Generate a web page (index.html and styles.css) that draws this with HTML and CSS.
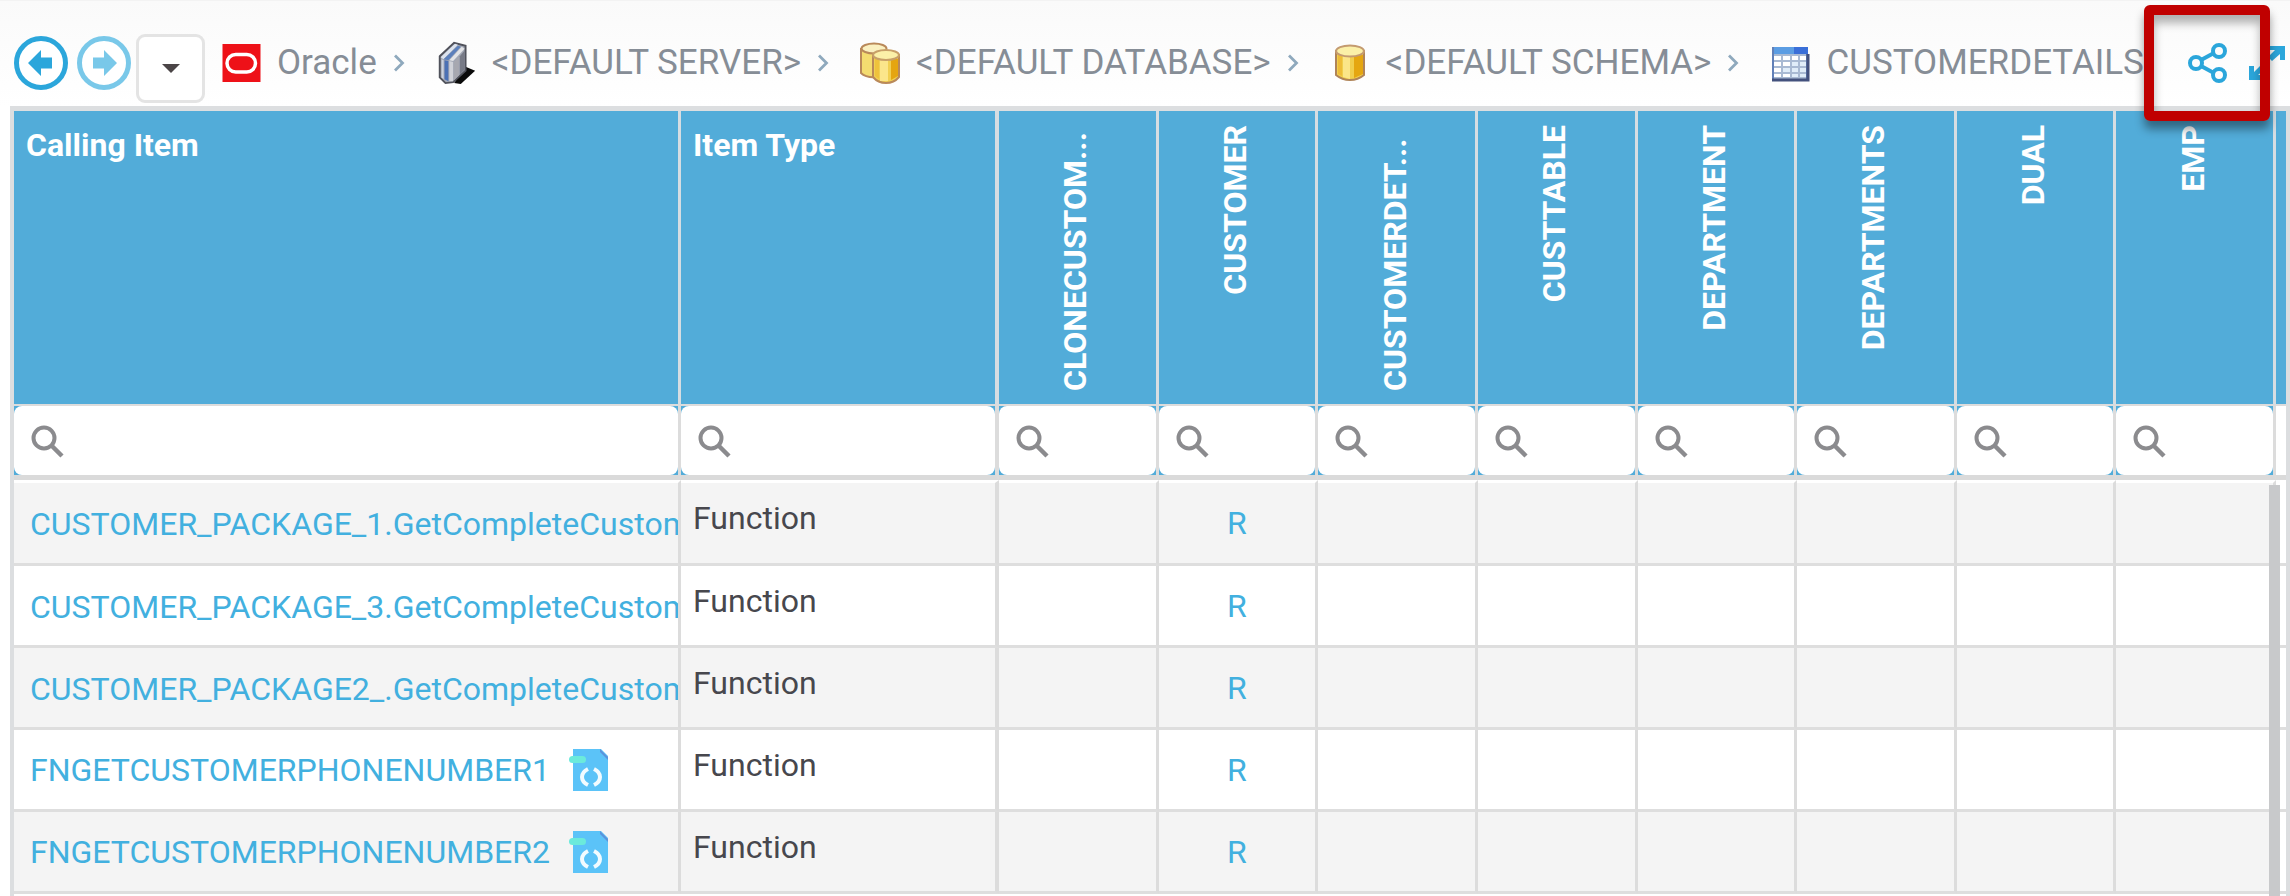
FILE: index.html
```html
<!DOCTYPE html>
<html lang="en">
<head>
<meta charset="utf-8">
<title>CRUD Matrix</title>
<link rel="stylesheet" href="styles.css">
</head>
<body>
<svg class="defs" aria-hidden="true">
  <symbol id="search" viewBox="0 0 34 34"><circle cx="13" cy="13" r="10.5" fill="none" stroke="#8b8b8e" stroke-width="4"/><path d="M20.500 20.500L31 31" stroke="#8b8b8e" stroke-width="4.500"/></symbol>
  <symbol id="chev" viewBox="0 0 12 18"><path d="M2 1.500L9.500 9L2 16.500" fill="none" stroke="#8fa9bd" stroke-width="2.800"/></symbol>
  <symbol id="code" viewBox="0 0 40 44">
    <path d="M4 1H32L39 8V43H4Z" fill="#5bc3f8"/><path d="M31 1L39 9V12L31 4Z" fill="#5a93dc"/>
    <rect x="0" y="8" width="17" height="7" rx="3.500" fill="#6beadb"/>
    <path d="M19 21Q13 24 13 29T19 37M25 21Q31 24 31 29T25 37" fill="none" stroke="#f2fbff" stroke-width="4"/>
  </symbol>
</svg>

<header class="toolbar">
  <button class="round" aria-label="Back"><svg viewBox="0 0 54 54"><circle cx="27" cy="27" r="24.500" fill="#fff" stroke="#2ba6db" stroke-width="5"/><path d="M14 27L27 14V21.500H38V32.500H27V40Z" fill="#2ba6db"/></svg></button>
  <button class="round" aria-label="Forward"><svg viewBox="0 0 54 54"><circle cx="27" cy="27" r="24.500" fill="#fff" stroke="#79c8e9" stroke-width="5"/><path d="M40 27L27 14V21.500H16V32.500H27V40Z" fill="#79c8e9"/></svg></button>
  <button class="drop" aria-label="History"><svg viewBox="0 0 18 9"><path d="M0 0H18L9 9Z" fill="#4b4547"/></svg></button>

  <nav class="crumbs" aria-label="Breadcrumb">
    <span class="crumb">
      <svg class="ico" viewBox="0 0 40 40"><rect x="1.500" y="1" width="38" height="38" fill="#ee1118"/><rect x="6" y="11.500" width="28.500" height="17.500" rx="8.750" fill="none" stroke="#fff" stroke-width="3.500"/></svg>
      <a href="#">Oracle</a></span>
    <svg class="chev"><use href="#chev"/></svg>
    <span class="crumb">
      <svg class="ico" viewBox="0 0 40 46"><path d="M18 44L30 27L40 31L25 45Z" fill="#0a0a0a"/>
        <path d="M3 16L18 2L30 5V31L17 43L9 44L3 38Z" fill="#a2a7b4" stroke="#50525b" stroke-width="2"/>
        <path d="M4 17L19 3L22 4L7 19Z" fill="#dce3ee"/><path d="M7 19L22 5L25 6L12 20Z" fill="#5c80bc"/><path d="M13 20L26 6L29 8L17 21Z" fill="#e3e4e7"/>
        <path d="M5 19L7 20V40L5 38Z" fill="#cbd3e0"/><path d="M8 20L12 21V42L8 40Z" fill="#4b71b5"/><path d="M13 21L17 22V42L13 42Z" fill="#d0d2d8"/><path d="M18 22L23 17V36L18 41Z" fill="#a7a8b0"/><path d="M24 16L29 10V30L24 35Z" fill="#777a86"/></svg>
      <a href="#">&lt;DEFAULT SERVER&gt;</a></span>
    <svg class="chev"><use href="#chev"/></svg>
    <span class="crumb">
      <svg class="ico" viewBox="0 0 40 42"><g stroke="#b9895a" stroke-width="2"><path d="M1 7V31Q6 36 17 35L26 28V6Z" fill="#f4dc70"/><ellipse cx="14" cy="6.500" rx="12.500" ry="5" fill="#faf0c0"/>
        <path d="M13 13V35Q18 41 26 41T39 35V13Z" fill="#f1d052"/></g><path d="M15 17H19V37L15 34Z" fill="#efc23c"/><path d="M20 18H28V39H20Z" fill="#fbe68b"/><path d="M31 17H38V34L31 38Z" fill="#e5a510"/><ellipse cx="26" cy="13" rx="13" ry="5" fill="#fbf0a8" stroke="#c8a068" stroke-width="2"/></svg>
      <a href="#">&lt;DEFAULT DATABASE&gt;</a></span>
    <svg class="chev"><use href="#chev"/></svg>
    <span class="crumb">
      <svg class="ico" viewBox="0 0 40 40"><path d="M6 8V32Q12 37 20 37T34 32V8Z" fill="#f1ce4c" stroke="#b08458" stroke-width="2"/><path d="M8 12H12V33L8 31Z" fill="#eebc38"/><path d="M13 13H20V36L13 34Z" fill="#fbe588"/><path d="M24 12H33V31L24 35Z" fill="#e5a610"/><ellipse cx="20" cy="8" rx="14" ry="5.500" fill="#fbf0a8" stroke="#c49b70" stroke-width="2"/></svg>
      <a href="#">&lt;DEFAULT SCHEMA&gt;</a></span>
    <svg class="chev"><use href="#chev"/></svg>
    <span class="crumb">
      <svg class="ico" viewBox="0 0 40 40"><rect x="2" y="4" width="36" height="34" fill="#a9bad3"/><path d="M2 4H38V11H2Z" fill="#5b9de3"/><path d="M24 4H38V11H24Z" fill="#3a6fd8"/><path d="M4 13h7v4H4zM13 13h7v4h-7zM22 13h6v4h-6zM30 13h6v4h-6zM4 19h7v4H4zM13 19h7v4h-7zM4 25h7v4H4zM4 31h7v3H4zM13 31h7v3h-7z" fill="#fff"/><path d="M22 19h6v4h-6zM30 19h6v4h-6zM13 25h7v4h-7zM22 25h6v4h-6zM30 25h6v4h-6zM22 31h6v3h-6zM30 31h6v3h-6z" fill="#e0edf9"/><path d="M3 4V37H37V11" fill="none" stroke="#6180b8" stroke-width="2"/><path d="M2 37H38V11" fill="none" stroke="#43517d" stroke-width="3"/></svg>
      <a href="#">CUSTOMERDETAILS</a></span>
  </nav>

  <div class="actions">
    <button class="share" aria-label="Share"><svg viewBox="0 0 40 40"><g fill="none" stroke="#2ba6db" stroke-width="4"><path d="M13 17L26 10M13 23L26 30"/><circle cx="8" cy="20" r="6"/><circle cx="31" cy="8" r="6"/><circle cx="31" cy="32" r="6"/></g></svg></button>
    <button class="expand" aria-label="Expand"><svg viewBox="0 0 38 38"><path d="M16 2H37V16H32V10L24 17L20 13L27 6H16ZM1 22H6V28L12 22L16 26L10 31H16V36H1Z" fill="#2ba6db"/></svg></button>
    <span class="highlight"></span>
  </div>
</header>

<main class="frame">
  <table>
    <colgroup><col class="c-item"><col class="c-type"><col span="8"><col class="c-end"></colgroup>
    <thead>
      <tr class="heads">
        <th scope="col">Calling Item</th><th scope="col">Item Type</th>
        <th scope="col" class="v"><span class="long">CLONECUSTOM...</span></th>
        <th scope="col" class="v"><span>CUSTOMER</span></th>
        <th scope="col" class="v"><span class="long">CUSTOMERDET...</span></th>
        <th scope="col" class="v"><span>CUSTTABLE</span></th>
        <th scope="col" class="v"><span>DEPARTMENT</span></th>
        <th scope="col" class="v"><span>DEPARTMENTS</span></th>
        <th scope="col" class="v"><span>DUAL</span></th>
        <th scope="col" class="v"><span>EMP</span></th>
        <td></td>
      </tr>
      <tr class="filters">
        <td><label><svg><use href="#search"/></svg><input type="text" aria-label="Filter Calling Item"></label></td>
        <td><label><svg><use href="#search"/></svg><input type="text" aria-label="Filter Item Type"></label></td>
        <td><label><svg><use href="#search"/></svg><input type="text" aria-label="Filter column 1"></label></td>
        <td><label><svg><use href="#search"/></svg><input type="text" aria-label="Filter CUSTOMER"></label></td>
        <td><label><svg><use href="#search"/></svg><input type="text" aria-label="Filter column 3"></label></td>
        <td><label><svg><use href="#search"/></svg><input type="text" aria-label="Filter CUSTTABLE"></label></td>
        <td><label><svg><use href="#search"/></svg><input type="text" aria-label="Filter DEPARTMENT"></label></td>
        <td><label><svg><use href="#search"/></svg><input type="text" aria-label="Filter DEPARTMENTS"></label></td>
        <td><label><svg><use href="#search"/></svg><input type="text" aria-label="Filter DUAL"></label></td>
        <td><label><svg><use href="#search"/></svg><input type="text" aria-label="Filter EMP"></label></td>
        <td></td>
      </tr>
    </thead>
    <tbody>
      <tr><td class="item"><a href="#">CUSTOMER_PACKAGE_1.GetCompleteCustom</a></td><td class="type">Function</td><td></td><td class="op"><a href="#">R</a></td><td></td><td></td><td></td><td></td><td></td><td></td><td></td></tr>
      <tr><td class="item"><a href="#">CUSTOMER_PACKAGE_3.GetCompleteCustom</a></td><td class="type">Function</td><td></td><td class="op"><a href="#">R</a></td><td></td><td></td><td></td><td></td><td></td><td></td><td></td></tr>
      <tr><td class="item"><a href="#">CUSTOMER_PACKAGE2_.GetCompleteCustom</a></td><td class="type">Function</td><td></td><td class="op"><a href="#">R</a></td><td></td><td></td><td></td><td></td><td></td><td></td><td></td></tr>
      <tr><td class="item"><a href="#">FNGETCUSTOMERPHONENUMBER1</a><svg class="code"><use href="#code"/></svg></td><td class="type">Function</td><td></td><td class="op"><a href="#">R</a></td><td></td><td></td><td></td><td></td><td></td><td></td><td></td></tr>
      <tr><td class="item"><a href="#">FNGETCUSTOMERPHONENUMBER2</a><svg class="code"><use href="#code"/></svg></td><td class="type">Function</td><td></td><td class="op"><a href="#">R</a></td><td></td><td></td><td></td><td></td><td></td><td></td><td></td></tr>
    </tbody>
  </table>
  <div class="scrollbar"></div>
</main>
</body>
</html>
```

FILE: styles.css
```css
* { box-sizing: border-box; }
body {
  margin: 0;
  height: 100vh;
  overflow: hidden;
  display: flex;
  flex-direction: column;
  background: #fff;
  font-family: Roboto, "Liberation Sans", sans-serif;
  font-size: 32px;
  line-height: 40px;
}
.defs { position: absolute; width: 0; height: 0; }
a { text-decoration: none; }
button { background: none; border: 0; padding: 0; cursor: pointer; }
svg { display: block; flex: none; }

/* Toolbar */
.toolbar {
  display: flex;
  align-items: center;
  height: 106px;
  padding: 18px 4px 0 14px;
  border-top: 1px solid #f3f3f3;
  background: linear-gradient(#fafafa, #fff);
}
.round { width: 54px; height: 54px; margin-right: 9px; }
.round svg { width: 54px; height: 54px; }
.drop {
  display: flex;
  align-items: center;
  justify-content: center;
  width: 69px;
  height: 69px;
  margin: 11px 16px 0 -4px;
  border: 3px solid #e4e4e4;
  border-radius: 9px;
  background: #fff;
}
.drop svg { width: 18px; height: 9px; }
.crumbs { display: flex; align-items: center; white-space: nowrap; font-size: 35px; }
.crumb { display: flex; align-items: center; gap: 16px; }
.crumb a { color: #868d96; }
.ico { width: 40px; height: 44px; }
.chev { width: 12px; height: 18px; margin: 0 31px 0 16px; }
.actions { display: flex; align-items: center; gap: 20px; margin-left: auto; position: relative; z-index: 1; }
.share svg { width: 40px; height: 40px; }
.expand svg { width: 38px; height: 38px; }
.highlight {
  position: absolute;
  left: -44px;
  top: -38px;
  width: 126px;
  height: 116px;
  border: 10px solid #c00000;
  border-radius: 6px;
  box-shadow: 0 8px 10px rgba(0, 0, 0, .4), inset 0 8px 10px rgba(0, 0, 0, .3);
  pointer-events: none;
}

/* Matrix */
.frame {
  flex: 1;
  min-height: 0;
  margin-left: 10px;
  position: relative;
  border: solid #dcdee0;
  border-width: 5px 4px 0 4px;
}
table { width: 100%; table-layout: fixed; border-collapse: separate; border-spacing: 0; }
.c-item { width: 667px; }
.c-type { width: 318px; }
.c-end { width: 10px; }
th, td { padding: 0; border-right: 3px solid #dcdcdc; }
th:nth-child(2), td:nth-child(2) { border-right-width: 4px; }
td:last-child { border-right: 0; }
.heads { height: 295px; }
.heads th, .heads td {
  background: #52acd9;
  color: #fff;
  text-align: left;
  vertical-align: top;
  border-bottom: 2px solid #dcdcdc;
  border-right-color: #d6dde2;
}
.heads th { padding: 14px 12px; }
.heads th.v { padding: 14px 4px 0 0; }
.v span {
  display: block;
  width: 40px;
  margin: 0 auto;
  writing-mode: vertical-rl;
  transform: rotate(180deg);
  white-space: nowrap;
}
.v .long { height: 266px; }
.filters td { height: 74px; border-bottom: 5px solid #dadada; background: #52acd9; }
.filters td:last-child { background: #fff; }
.filters label {
  display: flex;
  align-items: center;
  gap: 8px;
  height: 69px;
  padding: 2px 8px 0 17px;
  border-radius: 8px;
  background: #fff;
}
.filters svg { width: 34px; height: 34px; }
.filters input { flex: 1; min-width: 0; border: 0; outline: 0; background: none; font: inherit; }
tbody tr { height: 82px; background: #fff; }
tbody tr:nth-child(odd) { background: #f4f4f4; }
tbody td { border-bottom: 3px solid #dedede; vertical-align: middle; }
tbody tr:first-child { height: 86px; }
tbody tr:first-child td { border-top: 3px solid #fff; }
tbody td:last-child { background: #fff; }
.item { padding-left: 16px; overflow: hidden; white-space: nowrap; }
.item a { display: inline-block; vertical-align: middle; }
.item a, .op a { color: #42b0df; }
.code { display: inline-block; width: 40px; height: 44px; margin-left: 19px; vertical-align: middle; }
.type { padding: 0 0 10px 12px; color: #47474d; }
.op { text-align: center; }
.scrollbar { position: absolute; right: 6px; top: 374px; bottom: 0; width: 11px; background: #c8c9cb; }
```
